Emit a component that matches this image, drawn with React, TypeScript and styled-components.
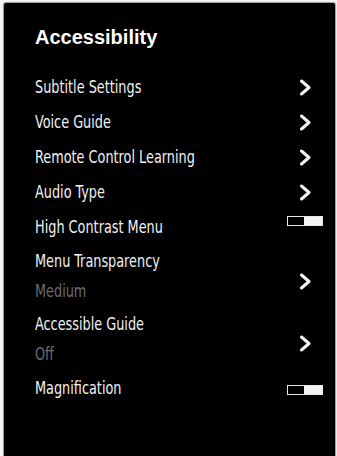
import React from "react";
import styled, { createGlobalStyle } from "styled-components";

const Global = createGlobalStyle`
  html, body { margin: 0; padding: 0; background: #f4f4f4; }
  body { width: 337px; height: 456px; overflow: hidden; }
`;

const Panel = styled.div`
  box-sizing: border-box;
  margin: 3px 2px 0 4px;
  height: 453px;
  background: #000;
  border-radius: 2px 2px 0 0;
  box-shadow: 0 0 1px 1px #9a9a9a;
  padding: 22px 12px 0 31px;
  display: flex;
  flex-direction: column;
`;

const Title = styled.h1`
  margin: 0 0 21px 0;
  font-family: "Liberation Sans", Arial, sans-serif;
  font-weight: 700;
  font-size: 20px;
  line-height: 24px;
  color: #fff;
`;

const Row = styled.div<{ $tall?: boolean }>`
  display: flex;
  align-items: ${(p) => (p.$tall ? "flex-start" : "center")};
  height: ${(p) => (p.$tall ? 63 : 35)}px;
  box-sizing: border-box;
  padding-top: ${(p) => (p.$tall ? 6 : 0)}px;
`;

const Texts = styled.div`
  flex: 1;
  display: flex;
  flex-direction: column;
  min-width: 0;
`;

const Label = styled.div`
  font-family: "DejaVu Sans Condensed", "DejaVu Sans", sans-serif;
  font-size: 17px;
  line-height: 21px;
  color: #f2f2f2;
  white-space: nowrap;
  transform: scaleX(0.84);
  transform-origin: left center;
`;

const Value = styled(Label)`
  line-height: 20px;
  margin-top: 9px;
  color: #6c6c6c;
`;

const Control = styled.div<{ $offset?: number }>`
  width: 36px;
  display: flex;
  justify-content: center;
  align-self: ${(p) => (p.$offset !== undefined ? "flex-start" : "center")};
  margin-top: ${(p) => p.$offset ?? 0}px;
`;

const Toggle = styled.div`
  box-sizing: border-box;
  width: 36px;
  height: 10px;
  border: 1px solid #e6e6e6;
  background: linear-gradient(to right, #000 0 48%, #f4f4f4 48% 100%);
`;

const Chevron = () => (
  <svg width="13" height="17" viewBox="0 0 13 17">
    <polyline
      points="2.5,2 10,8.5 2.5,15"
      fill="none"
      stroke="#f4f4f4"
      strokeWidth="3"
      strokeLinecap="round"
      strokeLinejoin="round"
    />
  </svg>
);

type Item =
  | { label: string; kind: "link"; value?: string; shift?: number }
  | { label: string; kind: "toggle"; shift: number };

const items: Item[] = [
  { label: "Subtitle Settings", kind: "link" },
  { label: "Voice Guide", kind: "link" },
  { label: "Remote Control Learning", kind: "link" },
  { label: "Audio Type", kind: "link" },
  { label: "High Contrast Menu", kind: "toggle", shift: 6 },
  { label: "Menu Transparency", kind: "link", value: "Medium", shift: 22 },
  { label: "Accessible Guide", kind: "link", value: "Off", shift: 21 },
  { label: "Magnification", kind: "toggle", shift: 14 },
];

export default function App() {
  return (
    <>
      <Global />
      <Panel>
        <Title>Accessibility</Title>
        {items.map((it) => {
          const tall = it.kind === "link" && !!it.value;
          return (
            <Row key={it.label} $tall={tall}>
              <Texts>
                <Label>{it.label}</Label>
                {it.kind === "link" && it.value && <Value>{it.value}</Value>}
              </Texts>
              {it.kind === "link" ? (
                <Control $offset={tall ? it.shift : undefined}>
                  <Chevron />
                </Control>
              ) : (
                <Control $offset={it.shift}>
                  <Toggle />
                </Control>
              )}
            </Row>
          );
        })}
      </Panel>
    </>
  );
}
